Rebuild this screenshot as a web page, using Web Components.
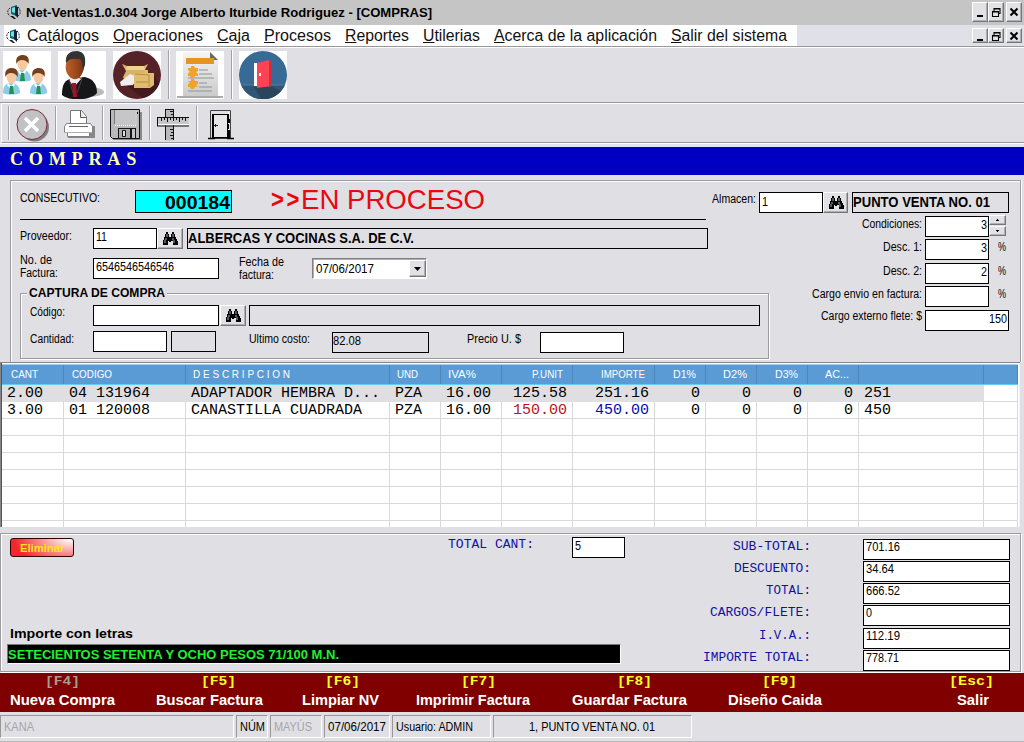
<!DOCTYPE html>
<html lang="es">
<head>
<meta charset="utf-8">
<title>Net-Ventas - Compras</title>
<style>
html,body{margin:0;padding:0}
body{width:1024px;height:742px;overflow:hidden;background:#e0dfe3;font-family:"Liberation Sans",Arial,sans-serif;font-size:12px;color:#000}
</style>
</head>
<body>
<ventas-app></ventas-app>
<script>
// Base: l/t = leading and top spacing, w/h = box size.
class Box extends HTMLElement {
  size() {
    const px = (p, a) => { if (this.hasAttribute(a)) this.style[p] = this.getAttribute(a) + 'px'; };
    px('marginLeft', 'l'); px('marginTop', 't'); px('width', 'w'); px('height', 'h');
  }
  connectedCallback() {
    if (!this.shadowRoot) this.attachShadow({ mode: 'open' }).innerHTML = this.view();
    this.size();
    this.ready();
  }
  ready() {}
}

// One line of text, condensed or stretched to its box.
class TxLabel extends Box {
  view() {
    return `<style>:host{display:block;flex:none;height:12px;white-space:nowrap;box-sizing:border-box}
      :host([b]){font-weight:bold}:host([mono]){font-family:"Liberation Mono","Courier New",monospace}
      span{display:inline-block;transform-origin:0 50%}</style><span><slot></slot></span>`;
  }
  ready() {
    const s = this.getAttribute('s'), c = this.getAttribute('c');
    if (s) this.style.fontSize = s + 'px';
    if (c) this.style.color = c;
    this.style.lineHeight = (this.getAttribute('h') || 12) + 'px';
    const span = this.shadowRoot.querySelector('span'), want = +this.getAttribute('w');
    const got = span.getBoundingClientRect().width;
    if (want && got) span.style.transform = `scaleX(${want / got})`;
  }
}
customElements.define('ui-row', class extends Box {
  view() { return `<style>:host{display:flex;align-items:flex-start;flex:none}</style><slot></slot>`; }
});
customElements.define('ui-stack', class extends Box {
  view() { return `<style>:host{display:flex;flex-direction:column;align-items:flex-start;flex:none}</style><slot></slot>`; }
});
customElements.define('ui-field', class extends Box {
  view() {
    return `<style>:host{display:flex;flex:none;box-sizing:border-box;height:21px;border:1px solid #000;background:#fff;padding:2px 1px 0 2px}
      :host([off]){background:transparent;padding-left:0}:host([right]){justify-content:flex-end}</style><slot></slot>`;
  }
});

const ICONS = {
  bino: `<svg width="16" height="14" viewBox="0 0 16 14"><path d="M4 0h2v2h1v3h2V2h1V0h2v2h1v3h1v2h1v2h1v4h-5V9H9v1H7V9H6v4H1V8h1V5h1V2h1z"/><path d="M5 2v3M11 2v3M3 8v3M4 6v2M12 8v3M11 6v2" stroke="#ddd" stroke-width=".8" fill="none"/></svg>`,
  min: `<svg width="12" height="12"><path d="M3 9h6v2H3z"/></svg>`,
  restore: `<svg width="12" height="12"><path d="M4 2.5h6v5H8M4 3h6M4 2v3M2.5 5.5h6v5h-6zM2 6h7" fill="none" stroke="#000" stroke-width="1.1"/></svg>`,
  close: `<svg width="12" height="12"><path d="M2.500 2.500l7 7M9.500 2.500l-7 7" stroke="#000" stroke-width="2"/></svg>`,
  up: `<svg width="7" height="5"><path d="M3 1h1v1h1v1H2V2h1z"/></svg>`,
  down: `<svg width="7" height="5"><path d="M2 1h3v1H4v1H3V2H2z"/></svg>`,
  drop: `<svg width="9" height="6"><path d="M1 1h7L4.500 5z"/></svg>`
};
customElements.define('ui-button', class extends Box {
  view() {
    return `<style>:host{display:flex;flex:none;box-sizing:border-box;align-items:center;justify-content:center;overflow:hidden;background:#e2e1e5;border:1px solid;border-color:#fff #77777a #77777a #fff;box-shadow:inset -1px -1px #b0b0b4}svg{display:block;flex:none}</style>${ICONS[this.getAttribute('icon')]}`;
  }
});

customElements.define('app-logo', class extends Box {
  view() {
    return `<style>:host{display:block;flex:none;width:14px;height:14px}svg{display:block}</style>
    <svg width="14" height="14" viewBox="0 0 14 14"><path d="M3 3C0 5 0 9 3 11M11 2c3 3 3 7 0 9" fill="none" stroke="#222" stroke-dasharray="2 1"/><path d="M4 2l6-2v11l-6-2z" fill="#0a6a70"/><path d="M5 3l3-1v6L5 7z" fill="#6fe0e8"/><path d="M8 1l3 1v11L8 10z" fill="#123"/><path d="M3 11h3l3 3H7z" fill="#111"/></svg>`;
  }
});

const person = (x, y) => `<g transform="translate(${x} ${y})"><path d="M0 25c0-7 3-10 8-10s9 3 9 10c-4 2-13 2-17 0z" fill="#8ccbea"/><path d="M5 15l3 3 3-3 1 2-4 4-4-4z" fill="#fff"/><path d="M7 18h3l1 8H6z" fill="#229152"/><ellipse cx="8.500" cy="9" rx="5" ry="6.300" fill="#f4c9a0"/><path d="M2.500 9C1 2 5 0 9 0s7 3 5.500 9C13 6 11 5 8 5 5 5 4 6 2.500 9z" fill="#74401c"/></g>`;
const PICS = {
  users: `<rect width="48" height="48" fill="#fff"/>${person(11, 4)}${person(0, 17)}${person(27, 17)}`,
  boss: `<defs><linearGradient id="f"><stop offset="0" stop-color="#c0602a"/><stop offset="1" stop-color="#7c3512"/></linearGradient></defs><rect width="48" height="48" fill="#fff"/><ellipse cx="31" cy="41" rx="15" ry="5" fill="#bbb"/><path d="M4 44c0-10 2-15 11-17l12-1c8 2 12 7 12 16-5 7-27 9-35 2z" fill="#17171a"/><path d="M10 28l6 8 8-9-3-2H11z" fill="#eee"/><path d="M14 32h4l1 14h-4z" fill="#a80f25"/><path d="M20 26l4 2-5 14M11 28l4 14" stroke="#444" fill="none"/><path d="M8 13c1-5 5-8 10-7l8 3c1 8-1 13-4 17-3 3-8 3-11-1-3-3-4-8-3-12z" fill="url(#f)"/><path d="M8 12C7 3 12 0 19 0c7 1 9 5 8 14l-2 5c-1-4 0-8-3-11-5 0-10-2-14 4z" fill="#343232"/>`,
  boxes: `<rect width="48" height="48" fill="#fff"/><circle cx="24" cy="24" r="24" fill="#552327"/><path d="M30 23l10 0 6 10a24 24 0 0 1-16 14L14 35z" fill="#43191d"/><path d="M9 13l5 2h17l4-2-3 6 3 8-2 5H13l-3-6 3-6z" fill="#d9b36b"/><path d="M14 15h17l1 4H13z" fill="#f0d592"/><path d="M7 31l10-8 8 3-5 8-12 1z" fill="#eee"/><path d="M21 22h10l1-3h3v3h6v12l-4 3H21z" fill="#e0bd6e"/><path d="M22 23l14 1v12M23 31h12" stroke="#b68c45" fill="none"/>`,
  report: `<defs><linearGradient id="p" x2="0" y2="1"><stop offset="0" stop-color="#f5f5f5"/><stop offset="1" stop-color="#cbcbcb"/></linearGradient></defs><rect width="48" height="48" fill="#fff"/><path d="M1 45h46v2H1z" fill="#aaa"/><path d="M7 1h27l8 8v36H7z" fill="url(#p)"/><path d="M34 1l8 8h-8z" fill="#66686a"/><path d="M10 7h28v6H10z" fill="#e8951d"/><path d="M23 19h9M23 23h13M12 27h26M23 32h8M23 36h13M12 40h24" stroke="#88959c"/><path d="M15 15h3l1 2h3v3l-2 1 2 2v2h-3l-1 2h-3l-1-2h-2v-3l2-1-2-2v-2h3zM15 28h3l1 2h3v3l-2 1 2 2h-3l-1 2h-3l-1-2h-2v-3l2-1-2-2h3z" fill="#f0a229"/>`,
  exit: `<rect width="48" height="48" fill="#fff"/><circle cx="24" cy="24" r="24" fill="#376a94"/><path d="M2 34h44a24 24 0 0 1-44 0z" fill="#315575"/><path d="M15 36h18l9 4a24 24 0 0 1-20 8z" fill="#2b455b"/><path d="M2 34h44" stroke="#547e9c"/><path d="M15 12h6v23h-6z" fill="#fff"/><path d="M18 12l12-3 2 2v24l-14 2z" fill="#ff4354"/><path d="M30 9l2 2v24l-2 1z" fill="#c92f44"/><path d="M20 22h2v3h-2z" fill="#fff"/>`
};
const TOOLS = {
  cancel: `<circle cx="18.500" cy="18" r="14.500" fill="#7e7e80"/><circle cx="16" cy="15.500" r="15" fill="#c2c2c4" stroke="#7a2a35"/><path d="M9 9l13 13M22 9L9 22" stroke="#fff" stroke-width="3.500"/>`,
  print: `<path d="M3 16h29v12H5z" fill="#88888a"/><path d="M7.500 14V.500h11l5 6V14" fill="#fff" stroke="#777"/><path d="M17.500.500v7h6" fill="#eee" stroke="#555"/><path d="M3.500 13.500h24l2 3v6h-3v4h-22v-4h-3v-6z" fill="#fff" stroke="#808083"/><path d="M6 16.500h19" stroke="#666"/><path d="M1 22.500h28" stroke="#b0b0b3"/>`,
  save: `<path d="M3 3h29v28H3z" fill="#88888b"/><path d="M.500.500h29v29h-27l-2-2z" fill="#b9b9bc" stroke="#111"/><path d="M5 1v15h20V1z" fill="#c6c6c9"/><path d="M5 16.500h21V1" fill="none" stroke="#fff" stroke-dasharray="1 1"/><path d="M4.500 1v14" stroke="#777"/><path d="M27 3h1v2h-1z"/><path d="M8 19h18v10H8z" fill="#151515"/><path d="M9 20h11v9H9z" fill="#a9a9ac"/><path d="M22 20h3v9h-3z" fill="#c4c4c7"/><path d="M12.500 21.500h3v6h-3z" fill="#ddd" stroke="#111"/>`,
  ruler: `<path d="M8.500.500h8v31h-8z" fill="#b9b9bc"/><path d="M8.500 0v31M16.500 0v31M8 .500h9" stroke="#111"/><path d="M13 20.500h4M14 23.500h3M13 26.500h4M14 29.500h3M13 2.500h3M14 5.500h3" stroke="#111"/><path d="M.500 8.500h31v8H.500z" fill="#c7c7ca"/><path d="M0 8.500h32M.500 8v9M0 17h32" stroke="#111"/><path d="M1 15.500h31" stroke="#fff"/><path d="M4.500 9v3M7.500 9v2M10.500 9v4M13.500 9v2M16.500 9v3M19.500 9v2M22.500 9v4M25.500 9v2M28.500 9v3" stroke="#111"/>`,
  door: `<path d="M2.500 28V.500h20V28" fill="#e0dfe3" stroke="#444"/><path d="M4 4h16v24H4z" fill="#000"/><path d="M6 5h13v22H6z" fill="#e6e6ea"/><path d="M20.500 2v27" stroke="#fff"/><path d="M20 4v5M21 9v4M20 14v5M21 20v8" stroke="#000" stroke-width="2"/><path d="M0 28.500h7M19 28.500h7M4 28h17" stroke="#000" stroke-width="1.500"/><path d="M6 15.500h4M7.500 14v3" stroke="#222"/>`
};
customElements.define('tool-pic', class extends Box {
  view() {
    const n = this.getAttribute('name'), big = n in PICS, d = big ? 48 : 34;
    return `<style>:host{display:block;flex:none}svg{display:block}</style><svg width="${d}" height="${d}" viewBox="0 0 ${d} ${d}">${big ? PICS[n] : TOOLS[n]}</svg>`;
  }
});
customElements.define('tool-sep', class extends Box {
  view() { return `<style>:host{display:block;flex:none;box-sizing:border-box;width:2px;border-left:1px solid #a2a2a6;border-right:1px solid #fff}</style>`; }
});
customElements.define('tx-label', TxLabel);

const winButtons = (t, h) => `<ui-button icon="min" w="16" h="${h}" t="${t}"></ui-button><ui-button icon="restore" w="16" h="${h}" t="${t}"></ui-button><ui-button icon="close" l="2" w="16" h="${h}" t="${t}"></ui-button>`;

customElements.define('app-title', class extends Box {
  view() {
    return `<style>:host{display:flex;height:25px;background:#c5c5c5;padding-right:2px}i{flex:1}</style>
    <app-logo l="7" t="5"></app-logo><tx-label b s="13" l="5" t="5" h="15" w="406">Net-Ventas1.0.304 Jorge Alberto Iturbide Rodriguez - [COMPRAS]</tx-label><i></i>${winButtons(2, 20)}`;
  }
});
customElements.define('app-menu', class extends Box {
  view() {
    const it = [['Ca<u>t</u>álogos', 72], ['<u>O</u>peraciones', 90], ['<u>C</u>aja', 33], ['<u>P</u>rocesos', 67], ['<u>R</u>eportes', 64], ['<u>U</u>tilerias', 57], ['<u>A</u>cerca de la aplicación', 163], ['<u>S</u>alir del sistema', 116]];
    return `<style>:host{display:flex;height:21px;background:#e0e0e8;padding:0 2px 0 4px;border-bottom:1px solid #98989c;box-shadow:0 1px #fff;position:relative}
      nav{display:flex;gap:14px;background:#fff;width:793px;box-sizing:border-box}i{flex:1}tx-label{color:#111}</style>
    <nav><app-logo l="2" t="4"></app-logo>${it.map(([a, w], i) => `<tx-label s="16" h="20" t="1" w="${w}" ${i ? '' : 'l="-7"'}>${a}</tx-label>`).join('')}</nav><i></i>${winButtons(3, 15)}`;
  }
});
customElements.define('app-tools', class extends Box {
  view() {
    return `<style>:host{display:block}.a{display:flex;height:56px;border-bottom:1px solid #98989c;box-sizing:border-box;padding-top:4px}
      .b{display:flex;height:40px;box-sizing:border-box;border-top:1px solid #fff;border-left:1px solid #fff;border-bottom:1px solid #98989c;margin-left:1px;padding-top:2px}.e{height:4px;background:#e4e4f2;border-top:1px solid #fff;box-sizing:border-box}</style>
    <div class="a"><tool-pic name="users" l="3"></tool-pic><tool-pic name="boss" l="7"></tool-pic><tool-pic name="boxes" l="7"></tool-pic><tool-sep l="7" h="49" t="-1"></tool-sep><tool-pic name="report" l="6"></tool-pic><tool-sep l="7" h="49" t="-1"></tool-sep><tool-pic name="exit" l="6"></tool-pic></div>
    <div class="b"><tool-sep l="6" h="34"></tool-sep><tool-pic name="cancel" l="6" t="3"></tool-pic><tool-sep l="5" h="34"></tool-sep><tool-pic name="print" l="6" t="4"></tool-pic><tool-sep l="5" h="34"></tool-sep><tool-pic name="save" l="6" t="3"></tool-pic><tool-sep l="5" h="34"></tool-sep><tool-pic name="ruler" l="6" t="3"></tool-pic><tool-sep l="5" h="34"></tool-sep><tool-pic name="door" l="10" t="4"></tool-pic></div><div class="e"></div>`;
  }
});

customElements.define('ui-group', class extends Box {
  view() {
    return `<style>:host{display:block;box-sizing:border-box;border:1px solid #9b9ba0;box-shadow:1px 1px #fff,inset 1px 1px #fff}
      div{width:max-content;background:#e0dfe3;padding:0 2px;margin:-7px 0 0 6px}</style><div><slot name="legend"></slot></div><slot></slot>`;
  }
});

customElements.define('purchase-form', class extends Box {
  view() {
    const side = (h, lw, name, w, val, tail, t = 2) => `<div class="s" style="height:${h}px"><tx-label w="${lw}" t="${t}">${name}</tx-label><ui-field right w="${w}">${val}</ui-field>${tail}</div>`;
    const pct = '<tx-label w="8" l="9" t="2">%</tx-label>';
    return `<style>:host{display:block;height:187px;box-sizing:border-box;padding:5px 3px 0 10px}
      .p{height:182px;box-sizing:border-box;border:1px solid #9b9ba0;border-bottom:0;box-shadow:1px 0 #fff,inset 1px 1px #fff}
      .c{display:flex}.l{width:759px;flex:none}.s{display:grid;grid-template-columns:152px auto 1fr;column-gap:0;align-items:start}
      .s>tx-label:first-child{justify-self:end}.s>ui-field{margin-left:3px}.hr{height:1px;background:#000;width:686px;margin:3px 0 0 9px}
      .combo{display:flex;justify-content:space-between;box-sizing:border-box;width:115px;height:21px;margin:4px 0 0 28px;background:#fff;border:1px solid;border-color:#808084 #fff #fff #808084;box-shadow:inset 1px 1px #b0b0b4}
      .cy{background:#00ffff}.gt{letter-spacing:3px}</style>
    <div class="p">
      <ui-row h="35"><tx-label l="9" t="11" w="80">CONSECUTIVO:</tx-label><ui-field class="cy" right l="35" t="9" w="97" h="23"><tx-label b s="18" h="20" w="65">000184</tx-label></ui-field>
        <tx-label class="gt" b c="#e80810" s="25" l="39" t="4" h="28" w="31">&gt;&gt;</tx-label><tx-label c="#e80810" s="28" l="-1" t="5" h="28" w="184">EN PROCESO</tx-label>
        <tx-label l="227" t="12" w="44">Almacen:</tx-label><ui-field l="3" t="11" w="64"><tx-label w="6" t="1">1</tx-label></ui-field><ui-button icon="bino" t="11" w="25" h="21"></ui-button><ui-field off l="4" t="11" w="157"><tx-label b s="14" w="137" h="14">PUNTO VENTA NO. 01</tx-label></ui-field></ui-row>
      <div class="c"><div class="l"><div class="hr"></div>
        <ui-row h="34"><tx-label l="9" t="10" w="52">Proveedor:</tx-label><ui-field l="21" t="8" w="64"><tx-label w="11">11</tx-label></ui-field><ui-button icon="bino" t="8" w="26" h="21"></ui-button><ui-field off l="4" t="8" w="521"><tx-label b s="14" w="226" h="14">ALBERCAS Y COCINAS S.A. DE C.V.</tx-label></ui-field></ui-row>
        <ui-row h="34"><ui-stack l="9" w="38"><tx-label w="32">No. de</tx-label><tx-label w="38" t="1">Factura:</tx-label></ui-stack><ui-field l="35" t="4" w="126"><tx-label w="78">6546546546546</tx-label></ui-field>
          <ui-stack l="20" t="2" w="45"><tx-label w="45">Fecha de</tx-label><tx-label w="35" t="1">factura:</tx-label></ui-stack><div class="combo"><tx-label l="3" t="4" w="58">07/06/2017</tx-label><ui-button icon="drop" t="1" w="17" h="17"></ui-button></div></ui-row>
        <ui-group l="9" t="5" w="749" h="66"><tx-label slot="legend" b s="13" w="136">CAPTURA DE COMPRA</tx-label>
          <ui-row h="31"><tx-label l="9" t="7" w="35">Código:</tx-label><ui-field l="28" t="6" w="126"></ui-field><ui-button icon="bino" l="1" t="6" w="26" h="21"></ui-button><ui-field off l="3" t="6" w="511"></ui-field></ui-row>
          <ui-row><tx-label l="9" t="3" w="44">Cantidad:</tx-label><ui-field l="19" t="1" w="74"></ui-field><ui-field off l="4" t="1" w="45"></ui-field><tx-label l="33" t="3" w="61">Ultimo costo:</tx-label><ui-field off l="22" t="2" w="97"><tx-label w="28">82.08</tx-label></ui-field><tx-label l="38" t="3" w="54">Precio U. $</tx-label><ui-field l="19" t="2" w="84"></ui-field></ui-row>
        </ui-group></div>
        <div>${side(23, 60, 'Condiciones:', 64, '<tx-label w="6">3</tx-label>', '<ui-stack w="17" t="-1"><ui-button icon="up" w="17" h="10"></ui-button><ui-button icon="down" t="1" w="17" h="10"></ui-button></ui-stack>')}
        ${side(24, 39, 'Desc. 1:', 64, '<tx-label w="6">3</tx-label>', pct)}${side(23, 39, 'Desc. 2:', 64, '<tx-label w="6">2</tx-label>', pct)}
        ${side(24, 110, 'Cargo envio en factura:', 64, '', pct)}${side(21, 101, 'Cargo externo flete: $', 84, '<tx-label w="18">150</tx-label>', '', 0)}</div>
      </div></div>`;
  }
});

customElements.define('item-grid', class extends Box {
  view() {
    const head = [['CANT', 27, 9], ['CODIGO', 40, 8], ['D E S C R I P C I O N', 97, 7], ['UND', 21, 7], ['IVA%', 28, 7], ['P.UNIT', 31, 0], ['IMPORTE', 44, 0], ['D1%', 23, 0], ['D2%', 24, 0], ['D3%', 23, 0], ['AC...', 24, 0], ['', 0, 0], ['', 0, 0]];
    const rows = [['2.00', '04 131964', 'ADAPTADOR HEMBRA D...', 'PZA', '16.00', '125.58', '251.16', '0', '0', '0', '0', '251', ''],
      ['3.00', '01 120008', 'CANASTILLA CUADRADA', 'PZA', '16.00', '150.00', '450.00', '0', '0', '0', '0', '450', '']];
    const blank = Array(13).fill('');
    const color = (r, i) => r == 1 && i == 5 ? ' style="color:#c01020"' : r == 1 && i == 6 ? ' style="color:#0808b8"' : '';
    const body = [...rows, ...Array(7).fill(blank)].map((r, n) => `<div class="r${n ? '' : ' sel'}">${r.map((t, i) => `<span class="${i > 4 && i < 11 ? 'n' : ''}"${color(n, i)}>${t}</span>`).join('')}</div>`).join('');
    return `<style>:host{display:block;height:165px;width:1020px;box-sizing:border-box;overflow:hidden;border:solid #85858a;border-width:1px 0 0 1px;box-shadow:inset 1px 0 #555,inset -1px 0 #f4f4f8;padding:1px 2px 0 1px;background:#fff}
      .h,.r{display:grid;grid-template-columns:62px 122px 204px 51px 61px 71px 82px 51px 51px 51px 51px 125px 34px;width:1016px;overflow:hidden}
      .h{height:21px;background:#5b9bd5;border-top:1px solid #a6cdec;border-bottom:1px solid #62cdf5;box-sizing:border-box;color:#fff;width:1016px}
      .h div{border-right:1px solid #4c86bd;height:19px;box-sizing:border-box;display:flex;padding-top:3px}.h .n{justify-content:flex-end;padding-right:9px}
      .r{height:17px;font:15px/18px "Liberation Mono","Courier New",monospace}
      .r span{box-sizing:border-box;border-right:1px solid #d9d9dc;border-bottom:1px solid #d9d9dc;padding-left:5px;white-space:pre;height:17px}.r .n{text-align:right;padding:0 5px 0 0}
      .sel span:not(:last-child){background:#dfdee3;border-color:#dfdee3}</style>
      <div class="h">${head.map(([t, w, l], i) => `<div class="${i > 4 && i < 11 ? 'n' : ''}">${t ? `<tx-label s="11" l="${l}" w="${w}">${t}</tx-label>` : ''}</div>`).join('')}</div>${body}`;
  }
});

customElements.define('totals-panel', class extends Box {
  view() {
    const rows = [['SUB-TOTAL:', 78, '701.16', 34, 22], ['DESCUENTO:', 77, '34.64', 28, 22], ['TOTAL:', 45, '666.52', 34, 22], ['CARGOS/FLETE:', 101, '0', 6, 23], ['I.V.A.:', 52, '112.19', 34, 22], ['IMPORTE TOTAL:', 108, '778.71', 33, 21]];
    return `<style>:host{display:flex;height:139px;width:1021px;margin-top:6px;box-sizing:border-box;border:1px solid #9b9ba0;box-shadow:inset 1px 1px #fff,1px 1px #fff}
      .l{width:691px;flex:none}.del{box-sizing:border-box;width:64px;height:19px;margin:4px 0 0 9px;border:1px solid #300;border-radius:3px;background:radial-gradient(ellipse 90% 160% at 95% 0,#fff 0,#fba9a9 40%,#f5252c 100%);padding:3px 0 0 9px;flex:none}
      .words{box-sizing:border-box;width:614px;height:20px;margin:4px 0 0 6px;background:#000;border:1px solid #77777a;border-color:#77777a #fff #fff #77777a;padding:2px 0}
      .t{display:grid;grid-template-columns:119px 147px;column-gap:52px;padding-top:5px}.t tx-label{margin-top:1px}.t ui-field{padding-top:1px}.t ui-field tx-label{margin-top:0}.t>tx-label{justify-self:end}</style>
    <div class="l"><ui-row h="94"><div class="del"><tx-label b s="11" c="#ffe51e" w="44">Eliminar</tx-label></div><tx-label mono s="13" c="#1010a8" l="374" t="5" w="86">TOTAL CANT:</tx-label><ui-field l="38" t="3" w="53"><tx-label w="6">5</tx-label></ui-field></ui-row>
      <tx-label b s="13" l="9" w="123">Importe con letras</tx-label><div class="words"><tx-label b s="13" h="15" c="#1ff02c" w="331">SETECIENTOS SETENTA Y OCHO PESOS 71/100 M.N.</tx-label></div></div>
    <div class="t">${rows.map(([a, w, v, vw, h]) => `<tx-label mono s="13" c="#1010a8" h="${h - (h == 21 ? 0 : 1)}" w="${w}" style="position:relative;top:-4px">${a}</tx-label><ui-field w="147" style="margin-bottom:${h - 21}px"><tx-label h="13" w="${vw}">${v}</tx-label></ui-field>`).join('')}</div>`;
  }
});

customElements.define('key-bar', class extends Box {
  view() {
    const k = [['[F4]', 35, 35, 'Nueva Compra', 105, 10], ['[F5]', 45, 35, 'Buscar Factura', 107, 41], ['[F6]', 23, 35, 'Limpiar NV', 77, 39], ['[F7]', 45, 35, 'Imprimir Factura', 114, 37], ['[F8]', 45, 35, 'Guardar Factura', 115, 42], ['[F9]', 34, 35, 'Diseño Caida', 94, 41], ['[Esc]', -8, 45, 'Salir', 32, 135]];
    return `<style>:host{display:flex;height:39px;margin-top:1px;background:#800000;color:#fff;position:relative}</style>${k.map(([a, x, w, b, bw, l], i) => `<ui-stack l="${l}" w="${bw}"><tx-label mono b s="13" h="14" t="2" l="${x}" w="${w}" c="${i ? '#ffff20' : '#a89c90'}">${a}</tx-label><tx-label b s="14" h="16" t="3" w="${bw}">${b}</tx-label></ui-stack>`).join('')}`;
  }
});
customElements.define('status-bar', class extends Box {
  view() {
    const c = [['KANA', 234, 3, 30, 1], ['NÚM', 32, 3, 25], ['MAYÚS', 52, 3, 38, 1], ['07/06/2017', 66, 3, 58], ['Usuario: ADMIN', 99, 3, 77], ['1, PUNTO VENTA NO. 01', 199, 35, 126]];
    return `<style>:host{display:flex;gap:2px;height:27px;box-sizing:border-box;margin-top:3px;border-bottom:1px solid #b8b8bb;box-shadow:0 1px #fff}
      div{box-sizing:border-box;height:23px;border:1px solid;border-color:#97979b #fff #fff #97979b;padding-top:5px;flex:none}.d{color:#a5a5a9}</style>
      ${c.map(([t, w, l, tw, d]) => `<div style="width:${w}px"${d ? ' class="d"' : ''}><tx-label l="${l}" w="${tw}">${t}</tx-label></div>`).join('')}`;
  }
});

customElements.define('ventas-app', class extends Box {
  view() {
    return `<style>:host{display:block;width:1024px;height:742px;overflow:hidden;background:#e0dfe3}
      header{height:28px;background:#0000c2;box-sizing:border-box;padding:1px 0 0 10px}header tx-label{font-family:"Liberation Serif","Times New Roman",serif;letter-spacing:6px}</style>
    <app-title></app-title><app-menu></app-menu><app-tools></app-tools>
    <header><tx-label b s="19" h="22" w="132" c="#ffffa8">COMPRAS</tx-label></header>
    <purchase-form></purchase-form><item-grid></item-grid><totals-panel></totals-panel><key-bar></key-bar><status-bar></status-bar>`;
  }
});
</script>
</body>
</html>
